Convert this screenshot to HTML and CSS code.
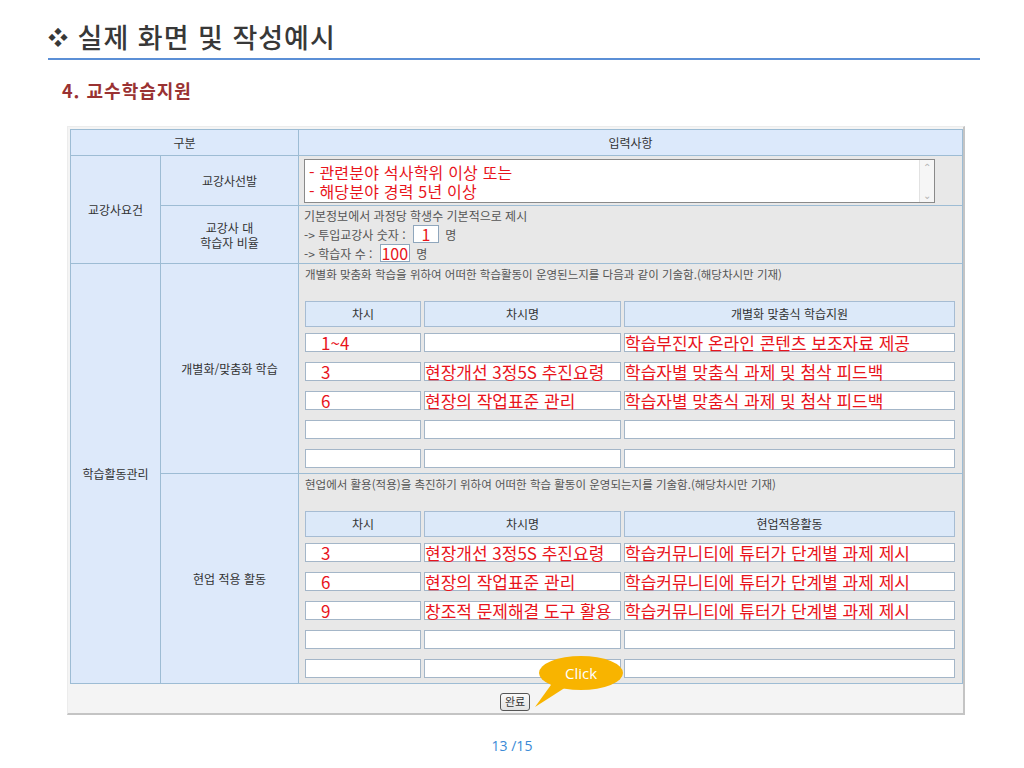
FILE: index.html
```html
<!DOCTYPE html>
<html lang="ko">
<head>
    <meta charset="UTF-8">
    <title>실제 화면 및 작성예시</title>
    <link rel="stylesheet" href="styles.css">
</head>
<body>
    <div class="slide">
        <h1 class="title"><span class="bullet">❖</span> 실제 화면 및 작성예시</h1>
        <h2 class="subtitle">4. 교수학습지원</h2>

        <!-- 입력 화면 -->
        <div class="panel">
            <table class="form">
                <colgroup>
                    <col class="c1"><col class="c2"><col class="c3">
                </colgroup>
                <tr class="r-head">
                    <th colspan="2">구분</th>
                    <th>입력사항</th>
                </tr>
                <tr class="r-select">
                    <td rowspan="2" class="label">교강사요건</td>
                    <td class="label">교강사선발</td>
                    <td class="input-cell">
                        <div class="textbox">
                            <div class="textbox-text">
                                <div>- 관련분야 석사학위 이상 또는</div>
                                <div>- 해당분야 경력 5년 이상</div>
                            </div>
                            <div class="scroll"><span>⌃</span><span>⌄</span></div>
                        </div>
                    </td>
                </tr>
                <tr class="r-ratio">
                    <td class="label">
                        <div>교강사 대</div>
                        <div>학습자 비율</div>
                    </td>
                    <td class="input-cell ratio">
                        <div class="ratio-line">기본정보에서 과정당 학생수 기본적으로 제시</div>
                        <div class="ratio-line">-&gt; 투입교강사 숫자 : <span class="num w1">1</span> 명</div>
                        <div class="ratio-line">-&gt; 학습자 수 : <span class="num w2">100</span> 명</div>
                    </td>
                </tr>
                <tr class="r-big">
                    <td rowspan="2" class="label">학습활동관리</td>
                    <td class="label">개별화/맞춤화 학습</td>
                    <td class="input-cell top">
                        <div class="note">개별화 맞춤화 학습을 위하여 어떠한 학습활동이 운영된느지를 다음과 같이 기술함.(해당차시만 기재)</div>
                        <div class="grid">
                            <div class="gh">차시</div><div class="gh">차시명</div><div class="gh">개별화 맞춤식 학습지원</div>
                            <div class="gi first">1~4</div><div class="gi"></div><div class="gi">학습부진자 온라인 콘텐츠 보조자료 제공</div>
                            <div class="gi first">3</div><div class="gi">현장개선 3정5S 추진요령</div><div class="gi">학습자별 맞춤식 과제 및 첨삭 피드백</div>
                            <div class="gi first">6</div><div class="gi">현장의 작업표준 관리</div><div class="gi">학습자별 맞춤식 과제 및 첨삭 피드백</div>
                            <div class="gi"></div><div class="gi"></div><div class="gi"></div>
                            <div class="gi"></div><div class="gi"></div><div class="gi"></div>
                        </div>
                    </td>
                </tr>
                <tr class="r-big">
                    <td class="label">현업 적용 활동</td>
                    <td class="input-cell top">
                        <div class="note">현업에서 활용(적용)을 촉진하기 위하여 어떠한 학습 활동이 운영되는지를 기술함.(해당차시만 기재)</div>
                        <div class="grid">
                            <div class="gh">차시</div><div class="gh">차시명</div><div class="gh">현업적용활동</div>
                            <div class="gi first">3</div><div class="gi">현장개선 3정5S 추진요령</div><div class="gi">학습커뮤니티에 튜터가 단계별 과제 제시</div>
                            <div class="gi first">6</div><div class="gi">현장의 작업표준 관리</div><div class="gi">학습커뮤니티에 튜터가 단계별 과제 제시</div>
                            <div class="gi first">9</div><div class="gi">창조적 문제해결 도구 활용</div><div class="gi">학습커뮤니티에 튜터가 단계별 과제 제시</div>
                            <div class="gi"></div><div class="gi"></div><div class="gi"></div>
                            <div class="gi"></div><div class="gi"></div><div class="gi"></div>
                        </div>
                    </td>
                </tr>
            </table>
            <div class="actions">
                <button class="done">완료</button>
            </div>

            <!-- 말풍선 -->
            <div class="bubble">
                <svg class="tail" width="40" height="30" viewBox="0 0 40 30">
                    <path d="M22 0 L40 4 L1 29 Z" fill="#f8b400"/>
                </svg>
                <span class="bubble-text">Click</span>
            </div>
        </div>

        <div class="page-num">13 /15</div>
    </div>
</body>
</html>
```

FILE: styles.css
```css
* {
    margin: 0;
    padding: 0;
    box-sizing: border-box;
}

body {
    background: #fff;
    font-family: "Noto Sans CJK KR", "Noto Sans", sans-serif;
    color: #333;
}

.slide {
    width: 1024px;
    height: 768px;
    padding-top: 18px;
}

/* 제목 */
.title {
    margin: 0 44px 0 48px;
    height: 42px;
    font-size: 27px;
    font-weight: 500;
    line-height: 38px;
    color: #383838;
    border-bottom: 2px solid #5b8fd6;
    letter-spacing: 1px;
}

.bullet {
    font-size: 20px;
    vertical-align: 3px;
}

.subtitle {
    margin: 18px 0 0 62px;
    font-size: 18px;
    font-weight: bold;
    line-height: 24px;
    letter-spacing: 1px;
    color: #9a3232;
}

/* 입력 화면 */
.panel {
    position: relative;
    width: 898px;
    height: 589px;
    margin: 24px 0 0 67px;
    padding: 2px 1px 0 2px;
    background: #f4f4f4;
    border-right: 2px solid #c4c4c4;
    border-bottom: 2px solid #c4c4c4;
    border-left: 1px solid #ececec;
    border-top: 1px solid #ececec;
}

.form {
    width: 892px;
    border-collapse: collapse;
    table-layout: fixed;
    font-size: 12px;
}

.c1 { width: 90px; }
.c2 { width: 138px; }
.c3 { width: 664px; }

.form th,
.form td {
    border: 1px solid #9dbcd4;
    font-weight: normal;
}

.form th {
    background: #dce9fb;
    color: #333;
    text-align: center;
}

.r-head { height: 26px; }
.r-select { height: 50px; }
.r-ratio { height: 58px; }
.r-big { height: 210px; }

.label {
    background: #dde9fa;
    text-align: center;
    color: #333;
    line-height: 15px;
}

.input-cell {
    background: #e8e8e8;
    padding: 0 5px;
    color: #555;
}

.input-cell.top {
    vertical-align: top;
    padding: 2px 5px 0 6px;
}

.textbox {
    display: flex;
    height: 44px;
    margin-right: 22px;
    background: #fff;
    border: 1px solid #8a8a8a;
}

.textbox-text {
    flex: 1;
    padding: 3px 0 0 4px;
    font-size: 16px;
    line-height: 19px;
    letter-spacing: 0.2px;
    color: #e8141c;
}

.scroll {
    width: 15px;
    display: flex;
    flex-direction: column;
    justify-content: space-between;
    align-items: center;
    background: #f6f6f6;
    border-left: 1px solid #e2e2e2;
    color: #b4b4b4;
    font-size: 10px;
    line-height: 14px;
}

.ratio {
    vertical-align: top;
    padding-top: 0;
}

.ratio-line {
    height: 19px;
    line-height: 19px;
    white-space: nowrap;
}

.num {
    display: inline-block;
    height: 18px;
    margin: 0 3px 0 4px;
    background: #fff;
    border: 1px solid #8fa6bc;
    color: #e8141c;
    font-size: 16px;
    line-height: 16px;
    text-align: center;
    vertical-align: top;
}

.num.w1 { width: 26px; }
.num.w2 { width: 30px; }

.note {
    font-size: 11.5px;
    line-height: 16px;
    margin-bottom: 19px;
    white-space: nowrap;
}

.grid {
    display: grid;
    grid-template-columns: 116px 197px 331px;
    grid-template-rows: 22px;
    grid-auto-rows: 19px;
    column-gap: 3px;
    row-gap: 10px;
}

.gh {
    height: 26px;
    align-self: start;
    background: #dce9f9;
    border: 1px solid #a6bcd3;
    text-align: center;
    line-height: 24px;
    color: #333;
}

.gi {
    background: #fff;
    border: 1px solid #a4b6c8;
    font-size: 17px;
    line-height: 17px;
    color: #e8141c;
    white-space: nowrap;
}

.gi.first {
    padding-left: 15px;
}

.actions {
    height: 31px;
    display: flex;
    justify-content: center;
    align-items: center;
    padding-right: 2px;
    padding-top: 4px;
}

.done {
    width: 30px;
    height: 18px;
    border: 1px solid #555;
    border-radius: 3px;
    background: linear-gradient(#fafafa, #e2e2e2);
    font-family: "Noto Sans CJK KR", sans-serif;
    font-size: 11px;
    line-height: 15px;
    color: #333;
}

/* 말풍선 */
.bubble {
    position: absolute;
    left: 471px;
    top: 529px;
    width: 84px;
    height: 34px;
    border-radius: 50%;
    background: #f8b400;
    display: flex;
    align-items: center;
    justify-content: center;
}

.tail {
    position: absolute;
    left: -5px;
    top: 22px;
}

.bubble-text {
    position: relative;
    color: #fff;
    font-family: "Open Sans", sans-serif;
    font-size: 15px;
}

.page-num {
    margin-top: 21px;
    text-align: center;
    font-family: "Open Sans", sans-serif;
    font-size: 14px;
    color: #3a8ad6;
}
```
